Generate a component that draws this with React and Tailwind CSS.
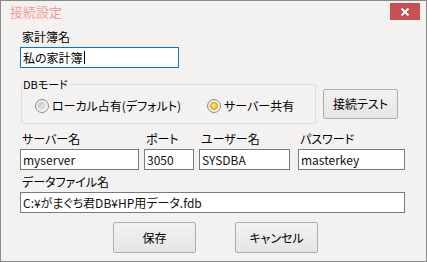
import React from "react";

const font = { fontFamily: '"Noto Sans CJK JP", "Liberation Sans", sans-serif' };

function Radio({ checked }) {
  return (
    <span className="relative flex h-[14px] w-[14px] shrink-0 items-center justify-center rounded-full border border-[#8c8c8c] bg-gradient-to-br from-[#e6e6e6] to-[#f8f8f8]">
      {checked ? (
        <span className="h-[8px] w-[8px] rounded-full border border-[#d49a00] bg-[radial-gradient(circle_at_40%_35%,#ffe680,#f2b200)]" />
      ) : (
        <span className="h-[8px] w-[8px] rounded-full bg-gradient-to-br from-[#c8c8c8] to-[#e8e8e8]" />
      )}
    </span>
  );
}

function Field({ label, value, w }) {
  return (
    <div className="flex flex-col">
      <div className="h-[14px] whitespace-nowrap pl-[2px] text-[12px] leading-[14px] text-black">{label}</div>
      <div className={`mt-[3px] flex h-[21px] items-center whitespace-nowrap border border-[#7a7a7a] bg-white pl-[2px] text-[12px] leading-[14px] text-[#101010] ${w}`}>
        {value}
      </div>
    </div>
  );
}

function Btn({ children, w, h }) {
  return (
    <div className={`flex items-center justify-center whitespace-nowrap rounded-[2px] border border-[#adadad] bg-gradient-to-b from-[#f2f2f2] to-[#e5e5e5] text-[12px] text-black ${w} ${h}`}>
      {children}
    </div>
  );
}

export default function App() {
  return (
    <div style={font} className="flex h-[262px] w-[427px] flex-col border border-[#8a8a8a] bg-[#f3f2f0] [font-feature-settings:'palt']">
      <div className="flex h-[24px] items-start justify-between">
        <div className="pl-[9px] pt-[3px] text-[13px] leading-[15px] text-[#f59c9c]">接続設定</div>
        <div className="mr-[6px] mt-[2px] flex h-[17px] w-[30px] items-center justify-center bg-[#c75050]">
          <svg width="10" height="8" viewBox="0 0 10 8">
            <path d="M1.5 0.5 L8.5 7.5 M8.5 0.5 L1.5 7.5" stroke="#fff" strokeWidth="2" />
          </svg>
        </div>
      </div>
      <div className="flex flex-col pl-[19px] pt-[5px]">
        <div className="h-[14px] pl-[2px] text-[12px] leading-[14px] text-black">家計簿名</div>
        <div className="mt-[3px] flex h-[21px] w-[159px] items-center border border-[#0078d7] bg-white pl-[2px] text-[12px] leading-[14px] text-black">
          私の家計簿<span className="ml-[1px] h-[13px] w-[1px] bg-black" />
        </div>
        <div className="mt-[16px] flex items-start">
          <div className="relative ml-[1px] grid h-[40px] w-[295px] grid-cols-[172px_1fr] items-center rounded-[2px] border border-[#dcdcdc] pl-[13px] pt-[4px]">
            <div className="absolute left-[1px] top-[-8px] bg-[#f3f2f0] pr-[2px] text-[11px] leading-[14px] text-black">DBモード</div>
            <div className="flex items-center whitespace-nowrap">
              <Radio />
              <span className="ml-[3px] text-[12px] leading-[14px] text-black">ローカル占有(デフォルト)</span>
            </div>
            <div className="flex items-center whitespace-nowrap">
              <Radio checked />
              <span className="ml-[3px] text-[12px] leading-[14px] text-black">サーバー共有</span>
            </div>
          </div>
          <div className="ml-[7px] mt-[5px]">
            <Btn w="w-[75px]" h="h-[30px]">接続テスト</Btn>
          </div>
        </div>
        <div className="mt-[8px] flex">
          <Field label="サーバー名" value="myserver" w="w-[119px]" />
          <div className="ml-[5px]"><Field label="ポート" value="3050" w="w-[50px]" /></div>
          <div className="ml-[5px]"><Field label="ユーザー名" value="SYSDBA" w="w-[91px]" /></div>
          <div className="ml-[8px]"><Field label="パスワード" value="masterkey" w="w-[107px]" /></div>
        </div>
        <div className="mt-[5px]">
          <Field label="データファイル名" value="C:¥がまぐち君DB¥HP用データ.fdb" w="w-[385px]" />
        </div>
        <div className="mt-[9px] flex pl-[93px]">
          <Btn w="w-[83px]" h="h-[31px]">保存</Btn>
          <div className="ml-[39px]"><Btn w="w-[83px]" h="h-[31px]">キャンセル</Btn></div>
        </div>
      </div>
    </div>
  );
}
